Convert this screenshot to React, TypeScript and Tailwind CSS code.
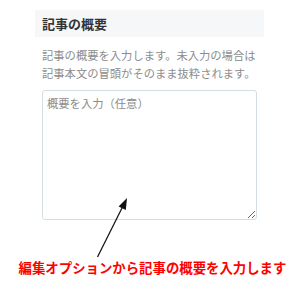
export default function App() {
  return (
    <div
      className="relative w-[297px] h-[291px] bg-white overflow-hidden"
      style={{ fontFamily: '"Noto Sans CJK JP", "Noto Sans", sans-serif' }}
    >
      {/* Summary section */}
      <div className="ml-[35px] mt-[10px] w-[229px]">
        <div className="h-[27px] bg-[#f6f7f9] px-[7px] flex items-center">
          <h3 className="text-[13px] font-bold text-[#333] leading-none">記事の概要</h3>
        </div>
        <div className="px-[7px]">
          <p className="mt-[9px] text-[11.3px] leading-[18px] text-[#8c8c8c] whitespace-nowrap">
            記事の概要を入力します。未入力の場合は
            <br />
            記事本文の冒頭がそのまま抜粋されます。
          </p>
          <textarea
            placeholder="概要を入力（任意）"
            className="mt-[8px] block w-full h-[130px] rounded-[3px] border border-[#d3dde2] px-[4px] py-[3px] text-[11.3px] leading-[18px] text-[#333] placeholder:text-[#8c8c8c] outline-none"
          />
        </div>
      </div>

      {/* Annotation */}
      <p className="mt-[38px] text-center text-[13.4px] leading-[18px] font-bold text-[#ff0000] whitespace-nowrap pl-[8px]">
        編集オプションから記事の概要を入力します
      </p>
      <svg
        className="absolute left-0 top-0 pointer-events-none"
        width="297"
        height="291"
        viewBox="0 0 297 291"
      >
        <line x1="97.5" y1="257" x2="123" y2="206" stroke="#111" strokeWidth="1.2" />
        <polygon points="127,198 125.8,210 118.6,206.4" fill="#111" />
      </svg>
    </div>
  );
}
